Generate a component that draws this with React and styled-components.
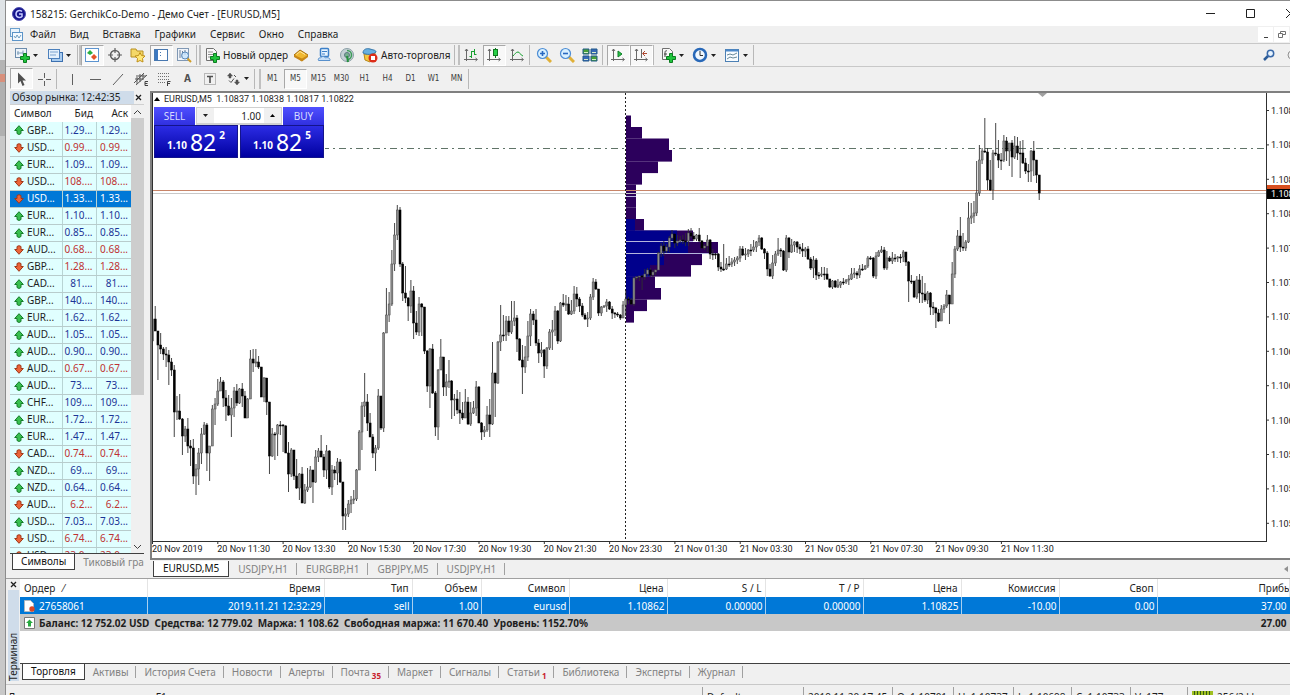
import React, { useState } from "react"
import styled, { createGlobalStyle, ThemeProvider } from "styled-components"

const theme = {
  face: "#f0f0f0",
  line: "#a0a0a0",
  dark: "#404040",
  select: "#0078d7",
  caption: "#cfdcea",
  ui: `"Noto Sans", "Open Sans", sans-serif`,
  chart: `Roboto, "Noto Sans", sans-serif`,
}

const GlobalStyle = createGlobalStyle`
  * {
    box-sizing: border-box;
  }
  body {
    margin: 0;
    overflow: hidden;
    background: #c4c6c8;
  }
  button, input {
    font: inherit;
    color: inherit;
    margin: 0;
    padding: 0;
    border: none;
    border-radius: 0;
    background: none;
    outline: none;
  }
  svg {
    display: block;
    flex-shrink: 0;
  }
`

const Desktop = styled.div`
  display: flex;
  height: 100vh;
  overflow: hidden;
  font-family: ${({ theme }) => theme.ui};
  font-size: 10px;
  color: #1e1e1e;
`
const Backdrop = styled.div`
  width: 6px;
  flex-shrink: 0;
  border-right: 1px solid #8c8c8c;
  background: linear-gradient(#dfe3e6 60px, #b4b4b4 60px, #b4b4b4 74px, #d8907c 74px, #d8907c 82px, #b0b0b0 82px, #b0b0b0 136px, #c8c8c8 136px);
`
const Window = styled.div`
  display: flex;
  flex: 1;
  flex-direction: column;
  min-width: 0;
  height: calc(100vh + 12px);
  border-top: 1px solid #8c8c8c;
  background: ${({ theme }) => theme.face};
`
const TitleBar = styled.header`
  display: flex;
  align-items: center;
  height: 25px;
  padding-left: 6px;
  background: #fff;
`
const Title = styled.h1`
  flex: 1;
  margin: 0;
  padding-left: 4px;
  font-size: 10px;
  font-weight: normal;
`
const WindowButton = styled.button`
  display: flex;
  align-items: center;
  justify-content: center;
  width: 40px;
  height: 24px;
  &:last-child {
    width: 20px;
    justify-content: flex-end;
    overflow: hidden;
  }
`
const MenuBar = styled.nav`
  display: flex;
  align-items: center;
  height: 17px;
  padding-left: 3px;
`
const MenuItem = styled.button`
  height: 17px;
  padding: 0 7px;
  line-height: 17px;
`
const MenuSpace = styled.div`
  flex: 1;
`
const ChildButton = styled.button`
  display: flex;
  align-items: center;
  justify-content: center;
  width: 15px;
  height: 15px;
  margin-right: 1px;
  background: #fff;
`
const ToolRow = styled.div`
  display: flex;
  align-items: center;
  height: ${({ $h }) => $h}px;
  border-top: 1px solid #c8c8c8;
  padding-left: ${({ $inset }) => $inset}px;
`
const Grip = styled.div`
  width: ${({ $w }) => $w || 4}px;
  height: 20px;
  border-left: 1px solid #b8b8b8;
  border-right: ${({ $double }) => ($double ? "2px solid #c0c0c0" : "none")};
`
const Tool = styled.button`
  display: flex;
  align-items: center;
  width: ${({ $w }) => $w || 23}px;
  height: 21px;
  padding-left: 2px;
  gap: 3px;
  line-height: 20px;
  white-space: nowrap;
  border: 1px solid transparent;
  ${({ $on }) => $on && "background: #f8f8f8; border-color: #a8a8a8 #fff #fff #a8a8a8;"}
`
const Frame = styled.button`
  width: 23px;
  height: 20px;
  font-family: "DejaVu Sans Condensed", "Noto Sans", sans-serif;
  font-size: 8px;
  color: #3c3c3c;
  border: 1px solid transparent;
  ${({ $on }) => $on && "background: #f8f8f8; border-color: #a8a8a8 #fff #fff #a8a8a8;"}
  b {
    font-size: 10px;
    color: #505050;
  }
`
const ToolSearch = styled.div`
  display: flex;
  justify-content: flex-end;
  flex: 1;
  gap: 12px;
  overflow: hidden;
`
const Workspace = styled.div`
  display: flex;
  flex: 1;
  min-height: 0;
`
const MarketWatch = styled.aside`
  display: flex;
  flex-direction: column;
  width: 143px;
  padding: 1px 5px 7px 4px;
`
const Caption = styled.div`
  display: flex;
  align-items: center;
  justify-content: space-between;
  height: 13px;
  padding-left: 2px;
  line-height: 13px;
  white-space: nowrap;
  background: linear-gradient(to right, ${({ theme }) => theme.caption} 124px, transparent 124px);
`
const CloseButton = styled.button`
  width: 11px;
  height: 11px;
  display: flex;
  align-items: center;
  justify-content: center;
`
const WatchBody = styled.div`
  display: flex;
  flex: 1;
  min-height: 0;
  background: #fff;
  border-top: 1px solid #d0d0d0;
`
const WatchClip = styled.div`
  flex: 1;
  overflow: hidden;
`
const WatchTable = styled.table`
  width: 121px;
  table-layout: fixed;
  border-collapse: collapse;
  font-size: 10px;
  th, td {
    height: 17px;
    padding: 0 3px 0 0;
    line-height: 15px;
    font-weight: normal;
    text-align: right;
    white-space: nowrap;
    overflow: hidden;
  }
  th:first-child, td:first-child {
    width: 52px;
    padding-left: 4px;
    text-align: left;
  }
  th:nth-child(2) {
    width: 34px;
  }
`
const WatchRow = styled.tr`
  color: ${({ $dir, $on }) => ($on ? "#fff" : $dir === "u" ? "#1c3496" : "#be3232")};
  background: ${({ $on, theme }) => ($on ? theme.select : "#e0ffff")};
  td {
    border-right: 1px solid #b8d4d4;
    border-bottom: 1px solid #b8cccc;
  }
  td:last-child {
    border-right: none;
  }
`
const SymbolCell = styled.span`
  display: flex;
  align-items: center;
  gap: 3px;
  color: ${({ $on }) => ($on ? "#fff" : "#1e1e1e")};
`
const ScrollBar = styled.div`
  display: flex;
  flex-direction: column;
  align-items: center;
  width: 13px;
  background: #f0f0f0;
`
const ScrollArrow = styled.button`
  display: flex;
  align-items: center;
  justify-content: center;
  width: 13px;
  height: 13px;
`
const ScrollThumb = styled.div`
  width: 13px;
  flex: 278;
  background: #cdcdcd;
`
const ScrollTrack = styled.div`
  flex: 145;
`
const Tabs = styled.div`
  display: flex;
  height: ${({ $h }) => $h}px;
  padding-left: ${({ $inset }) => $inset || 2}px;
  overflow: hidden;
  white-space: nowrap;
  border-top: 1px solid ${({ theme, $bare }) => ($bare ? "transparent" : theme.dark)};
`
const Tab = styled.button`
  flex-shrink: 0;
  padding: 0 ${({ $pad }) => $pad || 8}px;
  height: 16px;
  margin-top: ${({ $on }) => ($on ? -1 : 0)}px;
  line-height: 15px;
  color: ${({ $on }) => ($on ? "#111" : "#828282")};
  ${({ $on }) =>
    $on
      ? "background: #fff; border: solid #404040; border-width: 0 1px 1px 1px; height: 17px;"
      : "background: linear-gradient(#a0a0a0, #a0a0a0) right center / 1px 12px no-repeat;"}
  sub {
    vertical-align: -3px;
    line-height: 1;
    margin-left: 2px;
    font-size: 8px;
    font-weight: bold;
    color: #c8202c;
  }
`
const ChartWindow = styled.main`
  display: flex;
  flex: 1;
  flex-direction: column;
  min-width: 0;
  padding: 1px 0 0 1px;
`
const ChartFrame = styled.section`
  display: flex;
  flex: 1;
  min-height: 0;
  background: #fff;
  border: solid #808080;
  border-width: 2px 0 2px 2px;
`
const Plot = styled.div`
  position: relative;
  flex: 1;
  overflow: hidden;
`
const PlotCanvas = styled.svg`
  position: absolute;
  left: 0;
  top: 0;
  width: 100%;
  height: 100%;
  font-family: ${({ theme }) => theme.chart};
  font-size: 9px;
`
const PriceAxis = styled.svg`
  width: 24px;
  height: 100%;
  overflow: hidden;
  font-family: ${({ theme }) => theme.chart};
  font-size: 9px;
`
const ChartInfo = styled.div`
  position: relative;
  display: flex;
  align-items: center;
  height: 12px;
  padding-left: 2px;
  gap: 4px;
  white-space: pre;
  font-family: ${({ theme }) => theme.chart};
  font-size: 9px;
`
const OneClick = styled.div`
  position: relative;
  width: 172px;
  margin: 2px 0 0 1px;
  padding: 0 1px 1px;
  background: #fff;
  color: #fff;
`
const OneClickTop = styled.div`
  display: flex;
  height: 18px;
`
const SideButton = styled.button`
  width: 41px;
  height: 18px;
  color: #d8dcff;
  background: linear-gradient(#5050ff, #3030e0);
`
const Lots = styled.div`
  display: flex;
  flex: 1;
  margin: 0 1px;
  color: #1e1e1e;
  border: 1px solid #d0d0d0;
  border-width: 1px 1px 2px;
  background: #fff;
  input {
    flex: 1;
    width: 10px;
    padding-right: 3px;
    text-align: right;
  }
  button {
    display: flex;
    align-items: center;
    justify-content: center;
    width: 17px;
    background: #f0f0f0;
  }
`
const Quotes = styled.div`
  display: flex;
  gap: 2px;
`
const Quote = styled.button`
  display: flex;
  align-items: flex-end;
  justify-content: center;
  flex: 1;
  height: 33px;
  gap: 3px;
  padding-bottom: 4px;
  font-size: 10px;
  font-weight: bold;
  line-height: 15px;
  color: #fff;
  background: linear-gradient(#2c2ce4, #0000a0);
  border: 1px solid #14148c;
  b {
    font-size: 23px;
    font-weight: normal;
    line-height: 22px;
  }
  i {
    align-self: flex-start;
    font-style: normal;
    line-height: 18px;
  }
`
const ChartTabs = styled.div`
  display: flex;
  align-items: center;
  height: 18px;
  padding-right: 2px;
  > div {
    flex: 1;
  }
`
const Terminal = styled.section`
  display: flex;
  height: 107px;
  border-top: 1px solid ${({ theme }) => theme.line};
  border-bottom: 1px solid #c8c8c8;
`
const TerminalRail = styled.div`
  display: flex;
  flex-direction: column;
  align-items: center;
  width: 14px;
  span {
    flex: 1;
    width: 11px;
    margin-bottom: 3px;
    line-height: 11px;
    writing-mode: vertical-rl;
    transform: rotate(180deg);
    background: ${({ theme }) => theme.caption};
  }
`
const TerminalMain = styled.div`
  display: flex;
  flex: 1;
  flex-direction: column;
  min-width: 0;
`
const TradeArea = styled.div`
  flex: 1;
  min-height: 0;
  background: #fff;
`
const TradeTable = styled.table`
  width: 100%;
  table-layout: fixed;
  border-collapse: collapse;
  font-size: 10px;
  th, td {
    height: 17px;
    padding: 0 2px;
    line-height: 16px;
    font-weight: normal;
    text-align: right;
    white-space: pre;
    overflow: hidden;
  }
  th {
    height: 18px;
    padding-right: 3px;
    border-right: 1px solid #e4e4e4;
  }
  th:first-child, td:first-child {
    text-align: left;
    padding-left: 4px;
  }
  th:last-child {
    text-align: left;
    padding-left: 101px;
  }
`
const OrderRow = styled.tr`
  color: #fff;
  background: ${({ theme }) => theme.select};
  td {
    border-right: 1px solid #a8d0f0;
  }
  td:last-child {
    border: none;
    padding-right: 3px;
  }
`
const BalanceRow = styled.tr`
  background: #c8c8c8;
  && td {
    font-weight: bold;
  }
  td:last-child {
    padding-right: 3px;
  }
`
const WithIcon = styled.span`
  display: flex;
  align-items: center;
  gap: 4px;
`
const StatusBar = styled.footer`
  display: flex;
  align-items: center;
  height: 22px;
  padding-top: 2px;
  line-height: 20px;
  white-space: nowrap;
`
const StatusCell = styled.div`
  width: ${({ $w }) => $w}px;
  flex: ${({ $w }) => ($w ? "none" : 1)};
  display: flex;
  align-items: center;
  gap: 4px;
  height: 20px;
  padding-left: ${({ $first }) => ($first ? 2 : 4)}px;
  border-left: ${({ $first }) => ($first ? "none" : "1px solid #a0a0a0")};
`

const marketRows = [
  ["u", "GBP...", "1.29..."], ["d", "USD...", "0.99..."], ["u", "EUR...", "1.09..."], ["d", "USD...", "108...."],
  ["d", "USD...", "1.33..."], ["u", "EUR...", "1.10..."], ["u", "EUR...", "0.85..."], ["d", "AUD...", "0.68..."],
  ["d", "GBP...", "1.28..."], ["u", "CAD...", "81...."], ["u", "GBP...", "140...."], ["u", "EUR...", "1.62..."],
  ["u", "AUD...", "1.05..."], ["u", "AUD...", "0.90..."], ["d", "AUD...", "0.67..."], ["u", "AUD...", "73...."],
  ["u", "CHF...", "109...."], ["u", "EUR...", "1.72..."], ["u", "EUR...", "1.47..."], ["d", "CAD...", "0.74..."],
  ["u", "NZD...", "69...."], ["u", "NZD...", "0.64..."], ["d", "AUD...", "6.2..."], ["u", "USD...", "7.03..."],
  ["d", "USD...", "6.74..."], ["d", "USD...", "23.0..."],
]

// high, low, close of every bar; the open is the previous close
const bars = `316 345 319,306 331 331,332 380 345,333 354 349,347 360 354,347 367 355,350 385 362,358 376 370,365 437 412,396 420 411,
394 420 419,418 455 436,426 442 429,418 453 446,440 466 448,439 484 476,464 495 469,448 485 453,428 464 434,422 435 425,
423 471 453,446 481 446,405 446 409,398 425 404,379 406 391,377 391 382,380 407 398,390 421 406,395 416 415,398 437 408,
387 417 391,384 406 403,388 404 389,383 407 396,391 418 418,398 418 399,350 399 359,349 372 363,349 367 362,356 369 367,
367 397 397,377 402 378,378 415 402,404 474 456,428 457 434,432 460 434,424 456 425,421 435 425,424 452 426,425 453 453,
442 492 474,448 477 450,450 480 476,459 489 488,473 500 474,467 503 503,484 504 490,468 492 487,466 488 470,470 503 482,
450 483 457,448 462 451,435 457 457,454 477 470,445 479 451,450 489 487,465 495 470,466 480 473,458 485 462,459 483 482,
482 530 516,508 530 514,500 517 504,496 513 500,490 504 499,469 501 470,430 469 432,402 450 406,373 417 402,394 431 423,
413 437 437,434 458 453,445 471 448,389 450 396,396 430 428,332 432 333,288 332 315,292 322 304,250 306 264,223 271 235,
205 240 210,207 267 264,262 301 293,266 303 298,297 321 306,280 313 291,286 339 323,311 335 332,297 336 304,303 336 307,
307 354 351,350 392 386,348 408 349,344 394 393,391 436 427,369 440 370,339 370 357,357 396 387,374 396 382,360 388 381,
380 419 400,394 416 399,390 414 410,392 424 413,402 420 418,389 418 402,397 425 424,402 426 413,401 414 408,381 416 387,
386 423 423,422 440 432,426 437 430,406 432 415,399 437 424,342 425 373,374 417 383,341 384 342,305 351 335,315 341 335,
316 341 321,316 336 332,301 334 321,301 326 318,315 352 339,338 361 360,345 394 367,346 373 357,321 361 336,309 346 314,
311 325 320,309 346 343,339 363 353,342 357 350,349 378 366,347 369 348,329 350 332,320 350 330,306 336 311,310 344 341,
302 342 303,294 307 305,295 311 304,297 315 314,300 315 311,286 314 294,287 307 299,297 312 306,303 317 315,313 320 319,
312 327 318,294 320 297,278 300 282,279 290 289,289 316 313,306 316 307,305 308 306,299 312 302,301 310 309,306 319 313,
312 318 314,312 317 315,314 320 318,301 317 305,290 316 299,297 304 300,298 305 304,277 306 278,276 280 277,276 281 276,
275 290 277,269 280 274,268 276 270,268 277 275,270 277 272,269 275 270,252 270 253,243 257 246,241 256 251,244 253 247,
236 252 238,230 240 234,235 248 243,235 246 241,236 243 240,235 244 241,233 246 241,229 246 233,228 238 236,232 241 239,
234 241 235,228 242 241,240 249 248,244 250 246,235 252 240,239 259 254,249 260 254,253 259 254,253 271 267,262 272 269,
244 271 269,258 270 264,256 267 264,258 267 262,257 266 260,256 264 258,246 262 249,246 256 255,248 260 254,249 257 250,
244 256 250,240 252 247,241 252 242,235 246 238,237 250 249,248 259 253,251 276 269,264 277 276,255 279 263,251 266 254,
238 256 250,248 257 251,250 271 270,235 272 238,237 258 252,239 253 245,241 252 242,241 253 247,244 254 249,243 257 251,
247 257 249,246 260 259,257 270 268,256 278 260,258 280 275,272 279 275,267 277 274,267 280 274,268 280 279,279 288 287,
280 289 281,280 288 287,279 288 285,281 288 282,278 285 282,279 284 280,275 285 279,268 280 274,268 278 273,271 279 275,
265 278 269,264 271 269,265 270 266,256 268 258,256 260 258,257 278 276,252 279 256,250 257 252,246 253 250,247 270 268,
251 270 258,256 262 261,252 264 258,254 262 258,256 262 257,254 263 257,250 262 252,252 266 262,261 302 281,275 284 281,
281 298 297,276 299 280,274 303 293,276 303 294,283 302 300,291 304 293,292 315 307,302 315 308,307 328 313,309 322 321,
305 321 309,304 313 306,290 308 295,295 324 304,262 304 274,246 278 249,230 251 236,217 252 247,233 251 248,240 251 242,
202 243 218,203 224 216,201 223 213,161 216 193,145 196 160,148 164 151,118 153 152,148 190 180,160 191 190,150 200 153,
123 156 154,140 168 160,153 170 160,135 162 141,137 161 151,143 166 143,140 177 157,136 159 146,137 160 153,141 178 153,
140 164 163,158 174 171,164 182 171,150 182 151,141 176 160,160 183 175,175 200 193`
  .split(",")
  .map((bar) => bar.trim().split(" ").map(Number))

const profile = [5, 16, 43, 46, 32, 16, 10, 10, 10, 18, 67, 92, 76, 65, 29, 35, 21, 8]
const profileToday = [0, 0, 0, 0, 0, 0, 0, 0, 0, 9, 51, 62, 38, 24, 9, 8, 0, 0]

const times = ["20 Nov 2019", "20 Nov 11:30", "20 Nov 13:30", "20 Nov 15:30", "20 Nov 17:30", "20 Nov 19:30", "20 Nov 21:30",
  "20 Nov 23:30", "21 Nov 01:30", "21 Nov 03:30", "21 Nov 05:30", "21 Nov 07:30", "21 Nov 09:30", "21 Nov 11:30"]

const prices = ["1.10895", "1.10865", "1.10835", "1.10805", "1.10775", "1.10745", "1.10715", "1.10680", "1.10650", "1.10620",
  "1.10590", "1.10560", "1.10530"]

const columns = [
  ["Ордер", "27658061", 127], ["Время", "2019.11.21 12:32:29", 177], ["Тип", "sell", 88], ["Объем", "1.00", 69],
  ["Символ", "eurusd", 88], ["Цена", "1.10862", 98], ["S / L", "0.00000", 98], ["T / P", "0.00000", 98],
  ["Цена", "1.10825", 98], ["Комиссия", "-10.00", 98], ["Своп", "0.00", 98], ["Прибыль", "37.00"],
]

const chartTabs = ["EURUSD,M5", "USDJPY,H1", "EURGBP,H1", "GBPJPY,M5", "USDJPY,H1"]

const terminalTabs = [["Торговля"], ["Активы"], ["История Счета"], ["Новости"], ["Алерты"], ["Почта", "35"], ["Маркет"],
  ["Сигналы"], ["Статьи", "1"], ["Библиотека"], ["Эксперты"], ["Журнал"]]

const Svg = ({ children, size = 16 }) => (
  <svg width={size} height={size} viewBox="0 0 16 16" fill="none" aria-hidden="true">
    {children}
  </svg>
)

const Plus = () => <path d="M9.500 6.500h3v3h3v3h-3v3h-3v-3h-3v-3h3z" fill="#1fc43c" stroke="#0c7c20" />

const Axes = ({ children }) => (
  <Svg>
    <path d="M3.500 2v12M1 12.500h13M2 4l1.500-2L5 4M12.500 11l2 1.500-2 1.500" stroke="#686868" />
    {children}
  </Svg>
)

const Lens = ({ sign }) => (
  <Svg>
    <path d="M10 10l5 5" stroke="#e0b038" strokeWidth="3" />
    <circle cx="6.500" cy="6.500" r="5" fill="#d8f0ff" stroke="#4c8cd4" strokeWidth="1.200" />
    <path d={sign} stroke="#2868c0" strokeWidth="1.600" />
  </Svg>
)

const icons = {
  newChart: (
    <Svg>
      <rect x="1.500" y="1.500" width="11" height="9" fill="#eef4fa" stroke="#6c8cac" />
      <path d="M4 4v4M3 6h6M9 3.500v4" stroke="#7c9cb8" />
      <Plus />
    </Svg>
  ),
  profiles: (
    <Svg>
      <rect x="4.500" y="5.500" width="11" height="9" fill="#a8ccf0" stroke="#3c70b0" />
      <rect x="1.500" y="2.500" width="11" height="9" fill="#e4f0fc" stroke="#4c80bc" />
      <path d="M3 5h8M3 8h6" stroke="#7ca4d0" />
    </Svg>
  ),
  watch: (
    <Svg>
      <rect x="1.500" y="1.500" width="13" height="13" fill="#fff" stroke="#5c94d0" />
      <path d="M6 3l3 3-3 2-3-2z" fill="#28b040" />
      <path d="M10 7l3 3-3 3-3-3z" fill="#e45428" />
    </Svg>
  ),
  data: (
    <Svg>
      <circle cx="8" cy="8" r="4.500" stroke="#606060" strokeWidth="1.500" />
      <path d="M8 1v5M8 10v5M1 8h5M10 8h5" stroke="#606060" strokeWidth="1.200" />
    </Svg>
  ),
  favorites: (
    <Svg>
      <path d="M1 2h5l1 2h6v6H1z" fill="#f4d868" stroke="#b89020" />
      <path d="M10 5.500l1.500 3 3.500.5-2.500 2.500.5 3.500-3-1.500L7 15l.5-3.500L5 9l3.500-.5z" fill="#ffe878" stroke="#c09018" />
    </Svg>
  ),
  navigator: (
    <Svg>
      <rect x="1.500" y="2.500" width="13" height="11" fill="#fff" stroke="#4878b0" />
      <path d="M2 3h3v10H2z" fill="#3c78c0" />
      <path d="M7 5.500h1M7 8.500h1" stroke="#4878b0" />
    </Svg>
  ),
  tester: (
    <Svg>
      <rect x="1.500" y="1.500" width="11" height="12" fill="#f0f4fa" stroke="#8098b4" />
      <path d="M4 3v8M6.500 4v6M9 3v5" stroke="#6c8098" />
      <path d="M11 11l4 4" stroke="#d09c28" strokeWidth="2" />
      <circle cx="9" cy="8.500" r="3.500" fill="#c8e4fc" fillOpacity=".8" stroke="#5888b8" />
    </Svg>
  ),
  order: (
    <Svg>
      <path d="M2.500 1.500h7l3 3v9h-10z" fill="#f8f8f8" stroke="#707070" />
      <path d="M4 5h5M4 7.500h5M4 10h3" stroke="#909090" />
      <Plus />
    </Svg>
  ),
  gold: (
    <Svg>
      <path d="M1 8l6-5 8 5-6 6z" fill="#f0b830" stroke="#a87010" />
      <path d="M1 8l8 3.500L15 8v2l-6 4.500L1 10z" fill="#c88818" />
      <path d="M3.500 7.500L7 4.500l5 3" stroke="#ffe8a0" />
    </Svg>
  ),
  vps: (
    <Svg>
      <rect x="4.500" y="1.500" width="8" height="8" rx="1" fill="#e8f4ff" stroke="#3c80c8" strokeWidth="1.500" />
      <path d="M6 4.500h5M6 7h3" stroke="#3c80c8" />
      <path d="M2.500 13.500c-1-2 1-3 2-2.500 1-2 4-2 5 0 2-1 5 0 4.500 2.500z" fill="#c8e0f8" stroke="#5890cc" />
    </Svg>
  ),
  signals: (
    <Svg>
      <circle cx="8" cy="8" r="6.500" fill="#c4d0d4" stroke="#8ca0a8" />
      <path d="M8 3.500a4.500 4.500 0 010 9" stroke="#3c9c58" strokeWidth="1.500" />
      <circle cx="8" cy="8" r="2.500" fill="#78b090" stroke="#5c7880" />
      <path d="M8 9l1 6" stroke="#289040" strokeWidth="2" />
    </Svg>
  ),
  auto: (
    <Svg>
      <path d="M2 7l1 6 5 2 5-4V6z" fill="#f4c840" stroke="#b88818" />
      <path d="M1 6c0-4 4-5 7-4s6 1 6 3c-3 3-10 3-13 1z" fill="#68b0e0" stroke="#3474a8" />
      <circle cx="11" cy="11" r="4.500" fill="#dc2c18" />
      <rect x="9" y="9" width="4" height="4" fill="#fff" />
    </Svg>
  ),
  barChart: (
    <Axes>
      <path d="M8.500 4v7M6.500 9.500h2M11.500 2v6M8.500 4.500h3M11.500 7.500h2" stroke="#18a030" />
    </Axes>
  ),
  candleChart: (
    <Axes>
      <path d="M9.500 1v10" stroke="#107820" />
      <rect x="7.500" y="2.500" width="4" height="6" fill="#28d048" stroke="#107820" />
    </Axes>
  ),
  lineChart: (
    <Axes>
      <path d="M4 9c2-2 3-4 5-4s2 3 5 4" stroke="#18a030" />
    </Axes>
  ),
  zoomIn: <Lens sign="M4 6.500h5M6.500 4v5" />,
  zoomOut: <Lens sign="M4 6.500h5" />,
  tile: (
    <Svg>
      <path d="M1 2h6v5H1zM9 9h6v5H9z" fill="#48a038" stroke="#205888" />
      <path d="M9 2h6v5H9zM1 9h6v5H1z" fill="#3868b8" stroke="#205888" />
      <path d="M2 5.500h4M10 5.500h4M2 12.500h4M10 12.500h4" stroke="#d8ecc8" />
    </Svg>
  ),
  scroll: (
    <Axes>
      <path d="M8 4l4 3-4 3z" fill="#28c048" stroke="#108028" />
    </Axes>
  ),
  shift: (
    <Axes>
      <path d="M8.500 2v9" stroke="#686868" />
      <path d="M14 6.500h-4M12 4l-2.500 2.500L12 9" stroke="#b04830" />
    </Axes>
  ),
  indicators: (
    <Svg>
      <path d="M2.500 1.500h7l3 3v8h-10z" fill="#f8f8f8" stroke="#707070" />
      <path d="M7 4c-2-1-2 1-2 3v3M4 7h3" stroke="#404040" />
      <Plus />
    </Svg>
  ),
  clock: (
    <Svg>
      <circle cx="8" cy="8" r="6" fill="#f0f8ff" stroke="#2868b8" strokeWidth="2.500" />
      <path d="M8 4v4.500h3" stroke="#303030" />
    </Svg>
  ),
  template: (
    <Svg>
      <rect x="1.500" y="2.500" width="13" height="12" fill="#f8fcff" stroke="#4c80b4" />
      <path d="M2 3.500h12" stroke="#4c88c8" strokeWidth="2" />
      <path d="M3 8l3-1 3 1 4-2M3 12l3-2 3 1 4-1" stroke="#688898" />
    </Svg>
  ),
  cursor: (
    <Svg>
      <path d="M5 1.500v11l2.500-2.500 2 5 2-1-2-4.500H13z" fill="#505050" />
    </Svg>
  ),
  cross: (
    <Svg>
      <path d="M8.500 2v5M8.500 10v5M2 8.500h5M10 8.500h5" stroke="#606060" />
    </Svg>
  ),
  vline: (
    <Svg>
      <path d="M8.500 3v11" stroke="#606060" />
    </Svg>
  ),
  hline: (
    <Svg>
      <path d="M3 8.500h11" stroke="#606060" />
    </Svg>
  ),
  trend: (
    <Svg>
      <path d="M3 14L13 3" stroke="#606060" />
    </Svg>
  ),
  channel: (
    <Svg>
      <path d="M1 12L11 2M3 14L14 4M2 8h8M5 5h8M4 4v9M7 3v8M10 3v6" stroke="#585858" />
      <path d="M15 10.500h-3v4h3M12 12.500h2.500" stroke="#404040" />
    </Svg>
  ),
  fibo: (
    <Svg>
      <path d="M2 2.500h12M2 5.500h12M2 8.500h12M2 11.500h7" stroke="#707070" strokeDasharray="1 1" />
      <path d="M11.500 15v-4.500h3M11.500 12.500h2.500" stroke="#404040" />
    </Svg>
  ),
  label: (
    <Svg>
      <rect x="2.500" y="2.500" width="11" height="11" stroke="#808080" strokeDasharray="1 1" />
      <path d="M5 5.500h6M8 5v7" stroke="#505050" strokeWidth="1.600" />
    </Svg>
  ),
  arrows: (
    <Svg>
      <path d="M5 2l2.500 3H6v2H4V5H2.500zM12 14l-2.500-3H11V9h2v2h1.500z" fill="#505050" stroke="#505050" strokeWidth=".5" />
      <path d="M4 9.500l2 2 3-4M9 4l2 2" stroke="#505050" />
    </Svg>
  ),
}

const Caret = () => (
  <svg width="5" height="3" viewBox="0 0 5 3" aria-hidden="true">
    <path d="M0 0h5L2.500 3z" fill="#202020" />
  </svg>
)

const Cross = () => (
  <svg width="7" height="7" viewBox="0 0 7 7" aria-hidden="true">
    <path d="M1 1l5 5M6 1L1 6" stroke="#202020" strokeWidth="1.300" />
  </svg>
)

const Direction = ({ up }) => (
  <svg width="10" height="10" viewBox="0 0 10 10" aria-hidden="true">
    {up ? (
      <path d="M5 .7L9.300 5.500H7v3L5 9.500 3 8.500v-3H.7z" fill="#38c050" stroke="#147c28" />
    ) : (
      <path d="M5 9.300L9.300 4.500H7v-3L5 .7 3 1.500v3H.7z" fill="#ec6438" stroke="#a03818" />
    )}
  </svg>
)

const ToolButton = ({ icon, label, menu, ...rest }) => (
  <Tool {...rest} aria-label={icon}>
    {icons[icon]}
    {label}
    {menu && <Caret />}
  </Tool>
)

const Candles = () =>
  bars.map(([high, low, close], i) => {
    const open = i ? bars[i - 1][2] : 341
    const x = 152.5 + 2.72 * i
    const up = close < open
    return (
      <g key={i}>
        <path d={`M${x} ${high}V${low}`} stroke="#303030" strokeWidth="0.900" />
        <rect
          x={x - 1}
          y={Math.min(open, close)}
          width="2"
          height={Math.max(Math.abs(close - open), 1)}
          fill={up ? "#8c8c8c" : "#000"}
          stroke={up ? "#484848" : "#000"}
          strokeWidth="0.500"
        />
      </g>
    )
  })

const ChartCanvas = () => (
  <PlotCanvas aria-label="EURUSD,M5">
    <g transform="translate(-152 -93)">
      <path d="M152 148.500h1120" stroke="#607468" strokeDasharray="7 4 2 4" />
      {profile.map((w, i) => (
        <rect key={i} x="626" y={115.5 + 11.5 * i} width={w} height="11.600" fill="#2c005c" />
      ))}
      {profileToday.map((w, i) => (
        <rect key={i} x="626" y={115.5 + 11.5 * i} width={w} height="11.600" fill="#00008c" />
      ))}
      <path d="M626 196.500h10M626 241.500h67M626 253.500h91" stroke="#b4b4dc" />
      <path d="M152 193.500h1120" stroke="#c8c8c8" />
      <path d="M152 190.500h1120" stroke="#c88468" />
      <path d="M625.500 93v448" stroke="#202020" strokeDasharray="2 2" />
      <Candles />
      <path d="M1038 93h9l-4.500 4z" fill="#a0a0a0" />
      <path d="M152.500 93v448M152 541.500h1120" stroke="#303030" />
      {times.map((time, i) => (
        <g key={time}>
          <path d={`M${152.5 + 65.3 * i} 541v3`} stroke="#303030" />
          <text x={152 + 65.3 * i} y="552" fill="#202020">
            {time}
          </text>
        </g>
      ))}
    </g>
  </PlotCanvas>
)

const Prices = () => (
  <PriceAxis>
    <path d="M.5 0v449" stroke="#303030" />
    {prices.map((price, i) => (
      <g key={price}>
        <path d={`M1 ${17.5 + 34.4 * i}h2`} stroke="#303030" />
        <text x="5" y={21 + 34.4 * i} fill="#202020">
          {price}
        </text>
      </g>
    ))}
    <rect x="1" y="92" width="40" height="10" fill="#d85020" />
    <rect x="1" y="96" width="40" height="10" fill="#000" />
    <text x="5" y="104" fill="#fff">
      1.10822
    </text>
  </PriceAxis>
)

const App = () => {
  const [selected, setSelected] = useState(4)
  const [tab, setTab] = useState("Торговля")
  const [frame, setFrame] = useState("M5")
  const [lots, setLots] = useState("1.00")

  return (
    <ThemeProvider theme={theme}>
      <GlobalStyle />
      <Desktop>
        <Backdrop />
        <Window>
          <TitleBar>
            <svg width="14" height="14" viewBox="0 0 14 14" aria-hidden="true">
              <circle cx="7" cy="7" r="6.500" fill="#14148c" stroke="#5050b0" />
              <path d="M10 4.500C8 2.500 4 3.500 4 7s4 4.500 6 2.500V7H7" fill="none" stroke="#c8ccff" strokeWidth="1.500" />
            </svg>
            <Title>158215: GerchikCo-Demo - Демо Счет - [EURUSD,M5]</Title>
            <WindowButton aria-label="minimize">
              <svg width="9" height="9" viewBox="0 0 9 9"><path d="M0 4.500h9" stroke="#202020" /></svg>
            </WindowButton>
            <WindowButton aria-label="maximize">
              <svg width="9" height="9" viewBox="0 0 9 9"><path d="M.5.5h8v8h-8z" fill="none" stroke="#202020" /></svg>
            </WindowButton>
            <WindowButton aria-label="close">
              <svg width="4" height="9" viewBox="0 0 4 9"><path d="M0 0l9 9M0 9l9-9" stroke="#202020" /></svg>
            </WindowButton>
          </TitleBar>
          <MenuBar>
            <svg width="14" height="15" viewBox="0 0 14 15" fill="none" aria-hidden="true">
              <rect x="1.500" y="1.500" width="9" height="8" fill="#eaf4fc" stroke="#6ca0cc" />
              <rect x="3.500" y="5.500" width="10" height="8" fill="#f4faff" stroke="#5c94c8" />
              <path d="M5 9l1.500 2L8 8l2 3 2-3" stroke="#6c9cc0" />
            </svg>
            {["Файл", "Вид", "Вставка", "Графики", "Сервис", "Окно", "Справка"].map((item) => (
              <MenuItem key={item}>{item}</MenuItem>
            ))}
            <MenuSpace />
            <ChildButton aria-label="minimize chart">
              <svg width="4" height="9" viewBox="0 0 4 9"><path d="M0 7.500h4" stroke="#404040" /></svg>
            </ChildButton>
            <ChildButton aria-label="restore chart">
              <svg width="8" height="7" viewBox="0 0 8 7" fill="none" stroke="#707070">
                <path d="M.5 2.500h4v4h-4zM2.500 2V.5h5v3H5" />
              </svg>
            </ChildButton>
          </MenuBar>
          <ToolRow $inset={5} $h={23}>
            <ToolButton icon="newChart" menu $w={33} />
            <ToolButton icon="profiles" menu $w={33} />
            <Grip $double />
            <ToolButton icon="watch" $on />
            <ToolButton icon="data" />
            <ToolButton icon="favorites" />
            <ToolButton icon="navigator" $on />
            <ToolButton icon="tester" />
            <Grip $double $w={5} />
            <ToolButton icon="order" label="Новый ордер" $w={89} />
            <ToolButton icon="gold" />
            <ToolButton icon="vps" />
            <ToolButton icon="signals" />
            <ToolButton icon="auto" label="Авто-торговля" $w={95} />
            <Grip $double $w={6} />
            <ToolButton icon="barChart" />
            <ToolButton icon="candleChart" $on />
            <ToolButton icon="lineChart" />
            <Grip />
            <ToolButton icon="zoomIn" />
            <ToolButton icon="zoomOut" />
            <ToolButton icon="tile" />
            <Grip $w={5} />
            <ToolButton icon="scroll" $on />
            <ToolButton icon="shift" $on />
            <Grip />
            <ToolButton icon="indicators" menu $w={32} />
            <ToolButton icon="clock" menu $w={32} />
            <ToolButton icon="template" menu $w={32} />
            <Grip />
            <ToolSearch>
              <svg width="12" height="12" viewBox="0 0 12 12" aria-hidden="true">
                <path d="M1 11l4-4" stroke="#2c5c98" strokeWidth="2.500" />
                <circle cx="7.500" cy="4.500" r="3.200" fill="#e8f4ff" stroke="#3868a8" strokeWidth="1.500" />
              </svg>
              <svg width="3" height="12" viewBox="0 0 3 12" aria-hidden="true">
                <circle cx="5" cy="6" r="4" fill="none" stroke="#909090" />
              </svg>
            </ToolSearch>
          </ToolRow>
          <ToolRow $inset={4} $h={24}>
            <ToolButton icon="cursor" $on />
            <ToolButton icon="cross" />
            <Grip $w={5} />
            <ToolButton icon="vline" />
            <ToolButton icon="hline" />
            <ToolButton icon="trend" />
            <ToolButton icon="channel" />
            <ToolButton icon="fibo" />
            <Frame aria-label="text"><b>A</b></Frame>
            <ToolButton icon="label" />
            <ToolButton icon="arrows" menu $w={32} />
            <Grip $double $w={7} />
            {["M1", "M5", "M15", "M30", "H1", "H4", "D1", "W1", "MN"].map((item) => (
              <Frame key={item} $on={item === frame} onClick={() => setFrame(item)}>
                {item}
              </Frame>
            ))}
            <Grip />
          </ToolRow>
          <Workspace>
            <MarketWatch>
              <Caption>
                Обзор рынка: 12:42:35
                <CloseButton aria-label="close market watch"><Cross /></CloseButton>
              </Caption>
              <WatchBody>
                <WatchClip>
                  <WatchTable>
                    <thead>
                      <tr>
                        <th>Символ</th>
                        <th>Бид</th>
                        <th>Аск</th>
                      </tr>
                    </thead>
                    <tbody>
                      {marketRows.map(([dir, name, price], i) => (
                        <WatchRow key={i} $dir={dir} $on={i === selected} onClick={() => setSelected(i)}>
                          <td>
                            <SymbolCell $on={i === selected}>
                              <Direction up={dir === "u"} />
                              {name}
                            </SymbolCell>
                          </td>
                          <td>{price}</td>
                          <td>{price}</td>
                        </WatchRow>
                      ))}
                    </tbody>
                  </WatchTable>
                </WatchClip>
                <ScrollBar>
                  <ScrollArrow aria-label="scroll up">
                    <svg width="7" height="4" viewBox="0 0 7 4"><path d="M0 4l3.500-3.500L7 4" fill="none" stroke="#404040" /></svg>
                  </ScrollArrow>
                  <ScrollThumb />
                  <ScrollTrack />
                  <ScrollArrow aria-label="scroll down">
                    <svg width="7" height="4" viewBox="0 0 7 4"><path d="M0 0l3.500 3.500L7 0" fill="none" stroke="#404040" /></svg>
                  </ScrollArrow>
                </ScrollBar>
              </WatchBody>
              <Tabs $h={18}>
                <Tab $on>Символы</Tab>
                <Tab>Тиковый график</Tab>
              </Tabs>
            </MarketWatch>
            <ChartWindow>
              <ChartFrame>
                <Plot>
                  <ChartCanvas />
                  <ChartInfo>
                    <svg width="6" height="4" viewBox="0 0 6 4"><path d="M0 4l3-4 3 4z" /></svg>
                    {"EURUSD,M5  1.10837 1.10838 1.10817 1.10822"}
                  </ChartInfo>
                  <OneClick>
                    <OneClickTop>
                      <SideButton>SELL</SideButton>
                      <Lots>
                        <button aria-label="less"><Caret /></button>
                        <input aria-label="lots" value={lots} onChange={(e) => setLots(e.target.value)} />
                        <button aria-label="more">
                          <svg width="5" height="3" viewBox="0 0 5 3"><path d="M0 3h5L2.500 0z" /></svg>
                        </button>
                      </Lots>
                      <SideButton>BUY</SideButton>
                    </OneClickTop>
                    <Quotes>
                      <Quote>1.10<b>82</b><i>2</i></Quote>
                      <Quote>1.10<b>82</b><i>5</i></Quote>
                    </Quotes>
                  </OneClick>
                </Plot>
                <Prices />
              </ChartFrame>
              <ChartTabs>
                <Tabs as="nav" $h={18} $inset={3} $bare>
                  {chartTabs.map((name, i) => (
                    <Tab key={i} $on={i === 0} $pad={9}>
                      {name}
                    </Tab>
                  ))}
                </Tabs>
                <div />
                <svg width="4" height="6" viewBox="0 0 4 6"><path d="M4 0v6L0 3z" fill="#909090" /></svg>
              </ChartTabs>
            </ChartWindow>
          </Workspace>
          <Terminal>
            <TerminalRail>
              <CloseButton aria-label="close terminal"><Cross /></CloseButton>
              <span>Терминал</span>
            </TerminalRail>
            <TerminalMain>
              <TradeArea>
                <TradeTable>
                  <colgroup>
                    {columns.map(([, , width], i) => (
                      <col key={i} width={width} />
                    ))}
                  </colgroup>
                  <thead>
                    <tr>
                      {columns.map(([name], i) => (
                        <th key={i}>{i ? name : `${name}   ⁄`}</th>
                      ))}
                    </tr>
                  </thead>
                  <tbody>
                    <OrderRow>
                      {columns.map(([, value], i) => (
                        <td key={i}>
                          {i ? (
                            value
                          ) : (
                            <WithIcon>
                              <svg width="11" height="12" viewBox="0 0 11 12">
                                <path d="M.5.500h6l3 3v8h-9z" fill="#fff" stroke="#b0b8c0" />
                                <circle cx="8" cy="9" r="2.700" fill="#d84828" />
                              </svg>
                              {value}
                            </WithIcon>
                          )}
                        </td>
                      ))}
                    </OrderRow>
                    <BalanceRow>
                      <td colSpan="11">
                        <WithIcon>
                          <svg width="11" height="12" viewBox="0 0 11 12">
                            <path d="M.5.500h10v11H.5z" fill="#fff" stroke="#787878" />
                            <path d="M5.500 2.500L9 6H7v3.500H4V6H2z" fill="#28a840" />
                          </svg>
                          {"Баланс: 12 752.02 USD  Средства: 12 779.02  Маржа: 1 108.62  Свободная маржа: 11 670.40  Уровень: 1152.70%"}
                        </WithIcon>
                      </td>
                      <td>27.00</td>
                    </BalanceRow>
                  </tbody>
                </TradeTable>
              </TradeArea>
              <Tabs $h={21}>
                {terminalTabs.map(([name, count]) => (
                  <Tab key={name} $on={name === tab} onClick={() => setTab(name)}>
                    {name}
                    {count && <sub>{count}</sub>}
                  </Tab>
                ))}
              </Tabs>
            </TerminalMain>
          </Terminal>
          <StatusBar>
            <StatusCell $first>Для вызова справки нажмите F1</StatusCell>
            <StatusCell $w={101}>Default</StatusCell>
            <StatusCell $w={89}>2019.11.20 17:45</StatusCell>
            <StatusCell $w={61}>O: 1.10701</StatusCell>
            <StatusCell $w={60}>H: 1.10737</StatusCell>
            <StatusCell $w={58}>L: 1.10698</StatusCell>
            <StatusCell $w={59}>C: 1.10733</StatusCell>
            <StatusCell $w={57}>V: 177</StatusCell>
            <StatusCell $w={103}>
              <svg width="21" height="12" viewBox="0 0 21 12">
                <path d="M0 6h21" stroke="#a0c020" strokeWidth="12" />
                <path d="M2.500 0v12M5.500 0v12M8.500 0v12M11.500 0v12M14.500 0v12M17.500 0v12" stroke="#305818" />
                <path d="M15 8h6" stroke="#2878a0" strokeWidth="8" strokeDasharray="2 1" />
              </svg>
              256/2 kb
            </StatusCell>
          </StatusBar>
        </Window>
      </Desktop>
    </ThemeProvider>
  )
}

export default App
